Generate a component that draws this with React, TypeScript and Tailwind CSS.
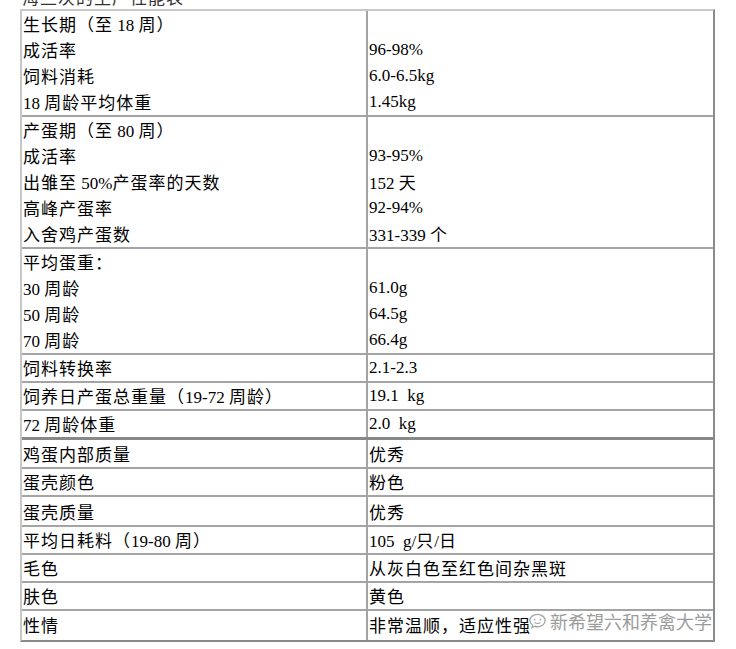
const rows: { left: string[]; right: string[]; pad?: string }[] = [
  {
    left: ["生长期（至 18 周）", "成活率", "饲料消耗", "18 周龄平均体重"],
    right: ["", "96-98%", "6.0-6.5kg", "1.45kg"],
  },
  {
    left: ["产蛋期（至 80 周）", "成活率", "出雏至 50%产蛋率的天数", "高峰产蛋率", "入舍鸡产蛋数"],
    right: ["", "93-95%", "152 天", "92-94%", "331-339 个"],
  },
  {
    left: ["平均蛋重：", "30 周龄", "50 周龄", "70 周龄"],
    right: ["", "61.0g", "64.5g", "66.4g"],
  },
  { left: ["饲料转换率"], right: ["2.1-2.3"] },
  { left: ["饲养日产蛋总重量（19-72 周龄）"], right: ["19.1  kg"] },
  { left: ["72 周龄体重"], right: ["2.0  kg"] },
  { left: ["鸡蛋内部质量"], right: ["优秀"], pad: "pt-[1px]" },
  { left: ["蛋壳颜色"], right: ["粉色"] },
  { left: ["蛋壳质量"], right: ["优秀"], pad: "pt-[2px]" },
  { left: ["平均日耗料（19-80 周）"], right: ["105  g/只/日"] },
  { left: ["毛色"], right: ["从灰白色至红色间杂黑斑"] },
  { left: ["肤色"], right: ["黄色"] },
  { left: ["性情"], right: ["非常温顺，适应性强"], pad: "pt-[1px] pb-[2px]" },
];

const cjk = /([\u3000-\u9fff\uff00-\uffef]+)/;

// CJK runs get a little tracking, like the SimSun text in the page
function Mixed({ text }: { text: string }) {
  return (
    <>
      {text.split(cjk).map((part, i) =>
        cjk.test(part) ? (
          <span
            key={i}
            className="tracking-[1px]"
            style={{ fontFamily: '"Noto Sans CJK SC", sans-serif' }}
          >
            {part}
          </span>
        ) : (
          <span key={i}>{part}</span>
        ),
      )}
    </>
  );
}

function Lines({ items }: { items: string[] }) {
  return (
    <>
      {items.map((t, i) => (
        <div key={i} className="h-[26px] whitespace-pre leading-[26px]">
          <Mixed text={t} />
        </div>
      ))}
    </>
  );
}

export default function App() {
  return (
    <div
      className="relative h-[649px] w-[736px] overflow-hidden bg-white text-[17px] text-black"
      style={{ fontFamily: '"Liberation Serif", "Noto Sans CJK SC", serif' }}
    >
      <div className="h-[9px] overflow-hidden pl-[22px]">
        <div className="-mt-[14px] leading-[22px] text-[#333]">
          <Mixed text="海兰灰的生产性能表" />
        </div>
      </div>
      <div className="relative ml-[20px] w-[695px] border-2 border-b-[#8a8a8a] border-l-[#c8c8c8] border-r-[#8a8a8a] border-t-[#c8c8c8]">
        {rows.map((r, i) => (
          <div
            key={i}
            className={`grid grid-cols-[346px_1fr] ${i === 0 ? "" : i === 6 ? "border-t-[3px] border-[#888]" : "border-t-2 border-[#a4a4a4]"}`}
          >
            <div className={`border-r-2 border-[#a4a4a4] pl-[1px] ${r.pad ?? ""}`}>
              <Lines items={r.left} />
            </div>
            <div className={`pl-[1px] ${r.pad ?? ""}`}>
              <Lines items={r.right} />
            </div>
          </div>
        ))}
        <div className="absolute bottom-[7px] right-[1px] flex items-center gap-[2px] text-[18px] leading-[24px] text-[#9c9c9c] [text-shadow:0_0_2px_#fff,0_0_2px_#fff]">
          <svg width="21" height="20" viewBox="0 0 22 20" fill="none" stroke="#a8a8a8" strokeWidth="1.4">
            <path d="M11 3c-4.4 0-8 2.9-8 6.5 0 2 1.1 3.8 2.9 5l-.7 2.5 2.9-1.5c.9.3 1.9.5 2.9.5 4.4 0 8-2.9 8-6.5S15.4 3 11 3z" />
            <circle cx="8" cy="8.5" r="0.9" fill="#a8a8a8" stroke="none" />
            <circle cx="14" cy="8.5" r="0.9" fill="#a8a8a8" stroke="none" />
            <path d="M8 11.5c1.6 1.3 4.4 1.3 6 0" />
          </svg>
          <span className="whitespace-nowrap" style={{ fontFamily: '"Noto Sans CJK SC", sans-serif' }}>
            新希望六和养禽大学
          </span>
        </div>
      </div>
    </div>
  );
}
